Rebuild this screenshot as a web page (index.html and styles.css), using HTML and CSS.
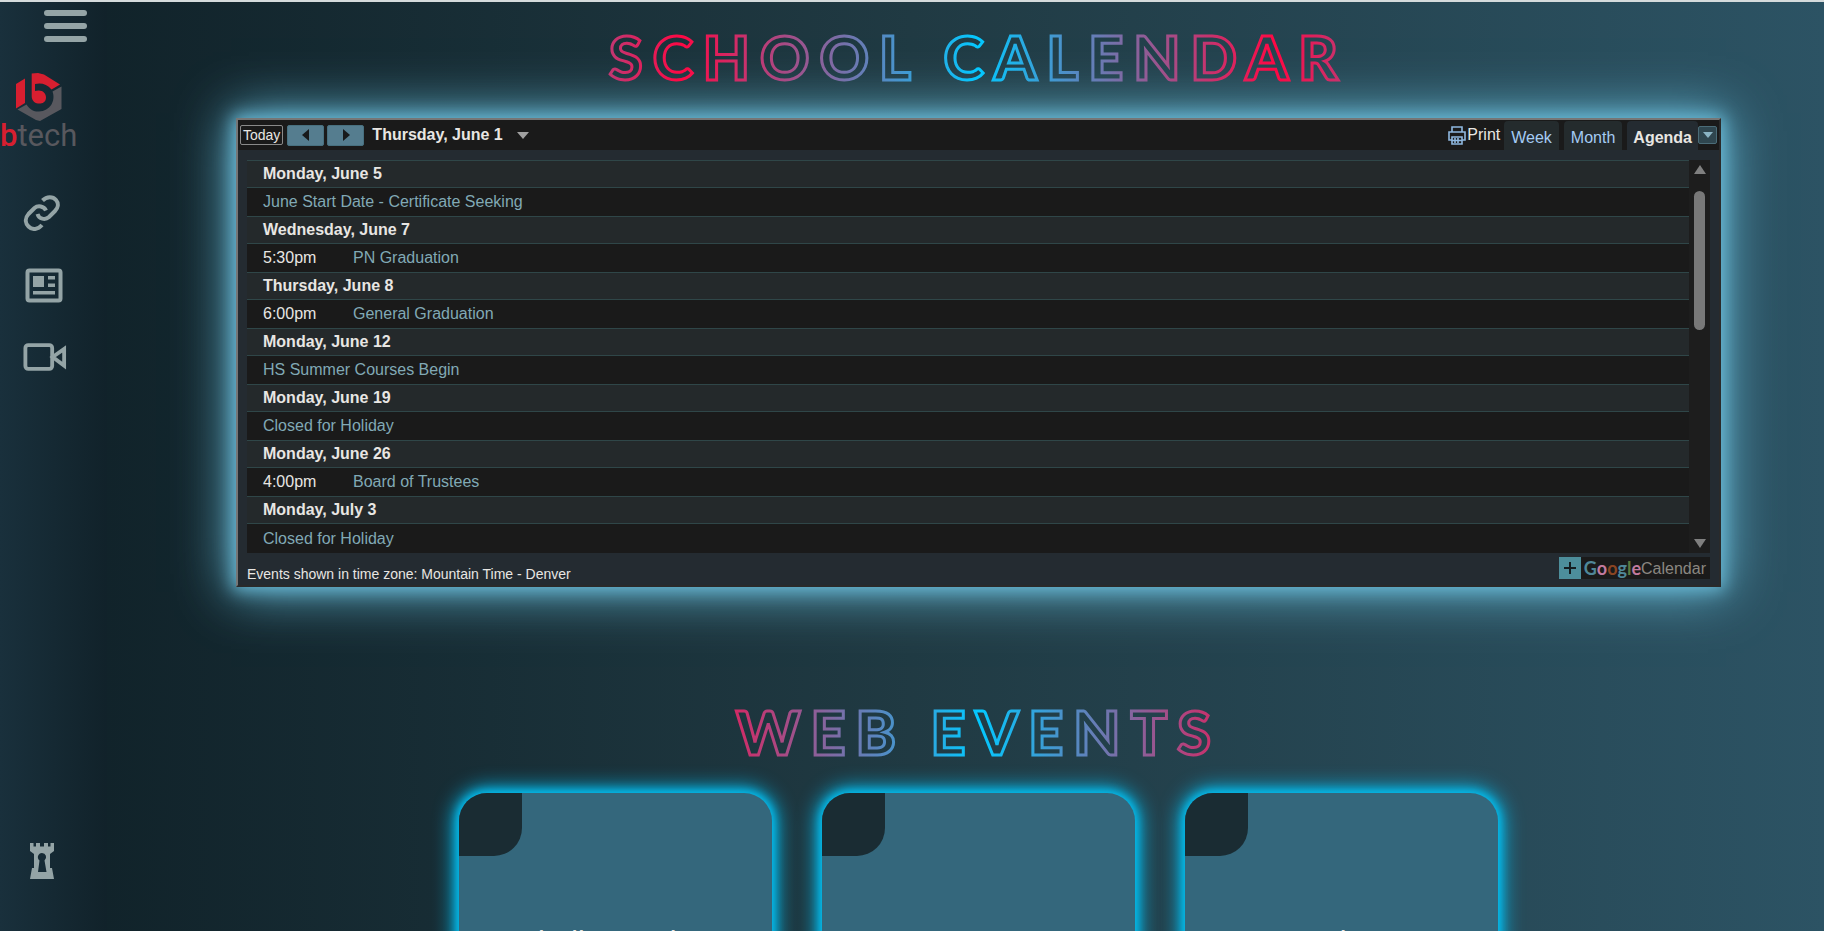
FILE: index.html
```html
<!DOCTYPE html>
<html lang="en">
<head>
<meta charset="utf-8">
<title>School Calendar</title>
<link rel="stylesheet" href="styles.css">
</head>
<body>
<nav class="sidebar" aria-label="Main">
  <button class="menu" type="button" aria-label="Menu"><span></span><span></span><span></span></button>
  <a class="logo" href="#" aria-label="btech home">
    <svg class="logo-mark" viewBox="0 0 46 48" aria-hidden="true">
      <path fill="#d71f30" d="M0 11 9 5.500V30L0 35.500Z M15.700 0.500 22 0 28 1.500 44 11.500 35.500 16.500C31 11 25 9.500 19 11V18C25 16 30 19 30 24.500S25 31 22 30.500C18 30 15.700 27 15.700 23Z"/>
      <path fill="#58585e" d="M45.500 13.500V36L24 48 20 47 1.500 36.500 10.500 31.500C14 37 19 39 23 38.500 34 38 40 28 36.500 18.500Z"/>
    </svg>
    <span class="logo-text"><b>b</b>tech</span>
  </a>
  <a class="nav-link" href="#" aria-label="Links">
    <svg viewBox="0 0 36 36" aria-hidden="true" fill="none" stroke="#94a4a6" stroke-width="4"><path d="M18.500 5.500C23 1 29 1.500 32 5S34 13 31 16L25 22C21 25.500 15 24 13.500 19M22 15.500C20 11 14 10 10.500 13L4.500 19C0 24 2 29 4.500 31.500 8.500 35.500 14 34.500 18 30"/></svg>
  </a>
  <a class="nav-link news" href="#" aria-label="News">
    <svg viewBox="0 0 38 36" aria-hidden="true"><rect x="2.500" y="3.500" width="33" height="30" rx="2" fill="none" stroke="#94a4a6" stroke-width="4"/><path fill="#94a4a6" d="M8 9h11v11H8zM23 9h7v3.500h-7zM23 16.500h7V20h-7zM8 24h22v3.500H8z"/></svg>
  </a>
  <a class="nav-link" href="#" aria-label="Videos">
    <svg class="wide" viewBox="0 0 46 36" aria-hidden="true" fill="none" stroke="#94a4a6" stroke-width="4"><rect x="2.500" y="5.500" width="28" height="25" rx="3"/><path d="M31 18 43 9.500v17.500z"/></svg>
  </a>
  <a class="nav-link nav-bottom" href="#" aria-label="Login">
    <svg class="rook" viewBox="0 0 24 36" aria-hidden="true"><path fill="#94a4a6" fill-rule="evenodd" d="M0 0H3.500V3.500H6V0H10V3.500H14V0H18V3.500H20.500V0H24V8L20 11V25H22L24 36H0L2 25H4V11L0 8ZM12 10A4.200 4.200 0 0 0 9.500 17.500L8 29H16.500L14.500 17.500A4.200 4.200 0 0 0 12 10Z"/></svg>
  </a>
</nav>
<main class="content">
  <h1 class="title">
    <svg class="title-art" role="img" aria-label="School Calendar">
      <defs><linearGradient id="neon" gradientUnits="userSpaceOnUse" x1="0" y1="0" x2="100%" y2="0">
        <stop offset=".1" stop-color="#03c8ff"/><stop offset=".3" stop-color="#ff0844"/><stop offset=".5" stop-color="#03c8ff"/><stop offset=".7" stop-color="#ff0844"/><stop offset=".9" stop-color="#03c8ff"/>
      </linearGradient></defs>
      <text x="50%" y="60" text-anchor="middle">SCHOOL CALENDAR</text>
    </svg>
  </h1>
  <section class="calendar" aria-label="School calendar">
    <header class="cal-head">
      <button class="today" type="button">Today</button>
      <button class="step" type="button" aria-label="Previous"><svg viewBox="0 0 8 12"><path d="M7 0v12L0 6z"/></svg></button>
      <button class="step" type="button" aria-label="Next"><svg viewBox="0 0 8 12"><path d="M1 0v12l7-6z"/></svg></button>
      <button class="range" type="button">Thursday, June 1 <svg viewBox="0 0 12 7"><path fill="#a0a0a0" d="M0 0h12L6 7z"/></svg></button>
      <a class="print" href="#"><svg viewBox="0 0 18 19" fill="none" stroke="#8fb8e0" stroke-width="1.600"><path d="M4 6V1h10v5M4 14H1V6h16v8h-3M4 11h10v7H4zM7 12v5M10 12v5M4 14.500h10"/></svg>Print</a>
      <button class="tab" type="button">Week</button>
      <button class="tab" type="button">Month</button>
      <button class="tab active" type="button">Agenda</button>
      <button class="more" type="button" aria-label="More"><svg viewBox="0 0 10 6"><path fill="#8ab4c4" d="M0 0h10L5 6z"/></svg></button>
    </header>
    <div class="cal-body">
      <div class="agenda">
        <table class="events">
          <tbody>
            <tr class="day"><th colspan="2">Monday, June 5</th></tr>
            <tr><td colspan="2"><a href="#">June Start Date - Certificate Seeking</a></td></tr>
            <tr class="day"><th colspan="2">Wednesday, June 7</th></tr>
            <tr><td class="time">5:30pm</td><td><a href="#">PN Graduation</a></td></tr>
            <tr class="day"><th colspan="2">Thursday, June 8</th></tr>
            <tr><td class="time">6:00pm</td><td><a href="#">General Graduation</a></td></tr>
            <tr class="day"><th colspan="2">Monday, June 12</th></tr>
            <tr><td colspan="2"><a href="#">HS Summer Courses Begin</a></td></tr>
            <tr class="day"><th colspan="2">Monday, June 19</th></tr>
            <tr><td colspan="2"><a href="#">Closed for Holiday</a></td></tr>
            <tr class="day"><th colspan="2">Monday, June 26</th></tr>
            <tr><td class="time">4:00pm</td><td><a href="#">Board of Trustees</a></td></tr>
            <tr class="day"><th colspan="2">Monday, July 3</th></tr>
            <tr><td colspan="2"><a href="#">Closed for Holiday</a></td></tr>
          </tbody>
        </table>
        <div class="scrollbar" aria-hidden="true">
          <svg viewBox="0 0 12 9"><path fill="#808080" d="M6 0 12 9H0z"/></svg>
          <span class="thumb"></span>
          <svg viewBox="0 0 12 9"><path fill="#808080" d="M6 9 12 0H0z"/></svg>
        </div>
      </div>
      <footer class="cal-foot">
        <span class="zone">Events shown in time zone: Mountain Time - Denver</span>
        <a class="google" href="#"><svg class="plus" viewBox="0 0 22 22"><path fill="#4d8e9b" d="M0 0h22v22H0z"/><path stroke="#151d20" stroke-width="2" d="M11 5v12M5 11h12"/></svg><span class="brand"><i class="g1">G</i><i class="g2">o</i><i class="g3">o</i><i class="g1">g</i><i class="g4">l</i><i class="g2">e</i></span><span>Calendar</span></a>
      </footer>
    </div>
  </section>
  <h2 class="title events-title">
    <svg class="title-art" role="img" aria-label="Web Events"><text x="50%" y="60" text-anchor="middle">WEB EVENTS</text></svg>
  </h2>
  <section class="cards" aria-label="Web events">
    <article class="card"><h3>challenge day</h3></article>
    <article class="card"></article>
    <article class="card"><h3>today</h3></article>
  </section>
</main>
</body>
</html>
```
FILE: styles.css
```css
* { box-sizing: border-box; }
body {
  margin: 0;
  display: flex;
  height: 100vh;
  overflow: hidden;
  border-top: 2px solid #d5dbdc;
  background: linear-gradient(90deg, #0f2027, #203a43, #2c5364);
  font-family: "Liberation Sans", Arial, sans-serif;
  font-size: 16px;
  color: #e8e6e3;
}
button { border: 0; margin: 0; padding: 0; background: none; font: inherit; color: inherit; }
a { color: inherit; text-decoration: none; }
svg { display: block; }

.sidebar {
  flex: 0 0 107px;
  display: flex;
  flex-direction: column;
  align-items: flex-start;
  background: linear-gradient(90deg, #19303c, #11222a);
}
.menu { display: flex; flex-direction: column; gap: 7px; width: 43px; margin: 8px 0 0 44px; }
.menu span { height: 6px; border-radius: 3px; background: #94a4a6; }
.logo { margin-top: 31px; }
.logo-mark { width: 46px; height: 48px; margin-left: 16px; }
.logo-text { display: block; margin-top: -2px; font: 31px/34px Roboto, sans-serif; color: #58585e; }
.logo-text b { font-weight: 500; color: #d71f30; }
.nav-link { margin: 0 0 36px 23px; }
.logo + .nav-link { margin-top: 42px; }
.nav-link svg { width: 38px; height: 36px; }
.news { margin-left: 25px; }
.nav-link .wide { width: 44px; }
.nav-link .rook { width: 24px; }
.nav-bottom { margin: auto 0 52px 30px; }

.content { flex: 1; min-width: 0; padding: 18px 103px 0 129px; }
.title { margin: 0; }
.title-art { width: 100%; height: 76px; overflow: visible; }
.title-art text {
  font: 900 61px Lato, sans-serif;
  letter-spacing: 10px;
  fill: none;
  stroke: url(#neon);
  stroke-width: 3px;
}

.calendar {
  margin-top: 22px;
  border: 2px solid;
  border-color: #767676 #2a2a2a #2a2a2a #767676;
  background: #242b31;
  box-shadow: 0 0 16px 3px #67b7d3, 0 0 50px 5px #67b7d3;
}
.cal-head {
  display: flex;
  align-items: center;
  height: 30px;
  padding: 0 2px;
  background: #1a1a1a;
}
.today { height: 20px; padding: 0 2px; border: 1px solid #8a8a8a; border-radius: 2px; font-size: 14px; line-height: 16px; }
.step { display: grid; place-items: center; width: 37px; height: 21px; margin-left: 4px; border: 1px solid #48707f; border-radius: 2px; background: #557d8f; }
.step + .step { margin-left: 3px; }
.step svg { width: 8px; height: 12px; fill: #181a1b; }
.range { display: flex; align-items: center; gap: 14px; margin: 0 auto 0 8px; font-weight: bold; }
.range svg { width: 12px; height: 7px; }
.print { display: flex; align-items: center; margin-right: 4px; }
.print svg { width: 18px; height: 19px; margin-right: 1px; }
.tab { align-self: flex-end; height: 29px; padding: 4px 7px 0; margin-right: 5px; border-radius: 4px 4px 0 0; background: #242b2d; color: #a4cbf4; }
.tab.active { margin-right: 0; padding: 4px 6px 0; background: #242b31; color: #e8e6e3; font-weight: bold; }
.more { display: grid; place-items: center; width: 19px; height: 18px; border: 1px solid #4b6c78; border-radius: 2px; background: #2f464f; }
.more svg { width: 10px; height: 6px; }

.cal-body { padding: 10px 9px 2px; }
.agenda { display: flex; background: #1a1a1a; }
.events { flex: 1; height: 393px; border-collapse: collapse; }
.events th, .events td { padding: 0; text-align: left; line-height: 18px; }
.events tr { height: 29px; }
.events .day { height: 27px; background: #24292b; }
.day th { border-top: 1px solid #2f4648; border-bottom: 1px solid #2f4648; }
.events th:first-child, .events td:first-child { padding-left: 16px; }
.events a { color: #81a9b5; }
.events .time { width: 106px; }
.scrollbar { display: flex; flex-direction: column; align-items: center; width: 21px; padding: 5px 0; background: #1d1d1d; }
.scrollbar svg { width: 12px; height: 9px; }
.thumb { width: 11px; height: 139px; margin: 17px 0 auto; border-radius: 6px; background: #787878; }
.cal-foot { display: flex; justify-content: space-between; padding-top: 4px; height: 30px; }
.zone { padding-top: 9px; font-size: 14px; line-height: 16px; }
.google { display: flex; height: 22px; padding-right: 4px; background: #1a1a1a; color: #8a8781; line-height: 23px; }
.plus { width: 22px; height: 22px; margin-right: 3px; }
.brand { font-family: Lato, sans-serif; font-weight: bold; font-size: 18px; }
.brand i { font-style: normal; }
.g1 { color: #4f8798; }
.g2 { color: #c27a9f; }
.g3 { color: #8a4523; }
.g4 { color: #5d7a3f; }

.events-title { margin-top: 108px; }
.cards { display: flex; justify-content: center; gap: 50px; margin-top: 22px; }
.card {
  flex: 0 0 313px;
  height: 400px;
  overflow: hidden;
  border-radius: 28px;
  background: #34677c;
  box-shadow: 0 0 8px 2px #04bdee, 0 0 20px 5px #04bdee;
}
.card::before { content: ""; display: block; width: 63px; height: 63px; border-bottom-right-radius: 28px; background: #1a2c33; }
.card h3 { margin: 69px 0 0; text-align: center; font-weight: normal; font-size: 30px; line-height: 34px; }
```
